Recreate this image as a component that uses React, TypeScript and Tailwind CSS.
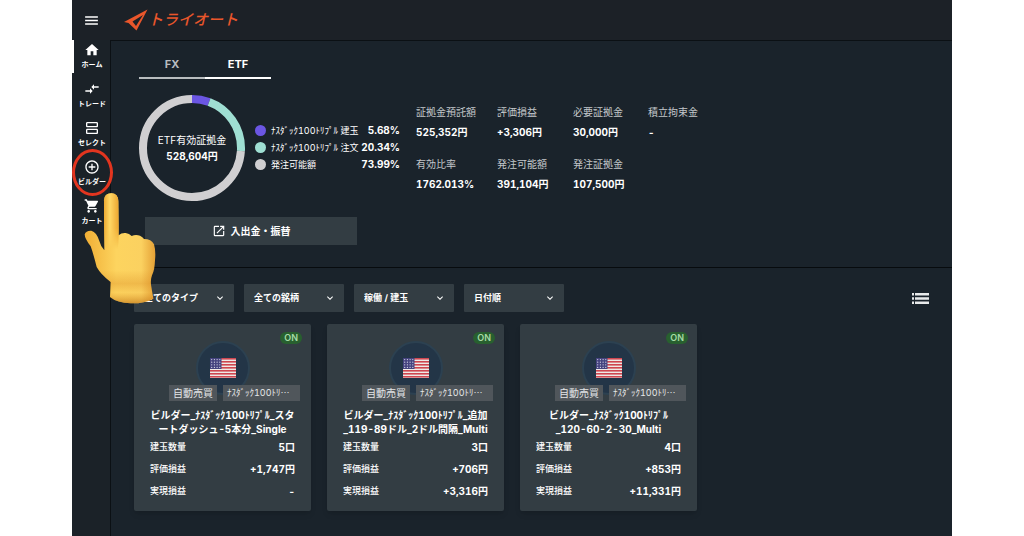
import type { IconType } from "react-icons"
import {
  MdAddCircleOutline,
  MdCompareArrows,
  MdExpandMore,
  MdHome,
  MdMenu,
  MdOpenInNew,
  MdOutlineViewAgenda,
  MdShoppingCart,
} from "react-icons/md"

type NavItem = { label: string; icon: IconType; active?: boolean; marked?: boolean }

type Strategy = {
  title: string[]
  amount: string
  valuation: string
  realized: string
}

const navItems: NavItem[] = [
  { label: "ホーム", icon: MdHome, active: true },
  { label: "トレード", icon: MdCompareArrows },
  { label: "セレクト", icon: MdOutlineViewAgenda },
  { label: "ビルダー", icon: MdAddCircleOutline, marked: true },
  { label: "カート", icon: MdShoppingCart },
]

const allocation = [
  { label: "ﾅｽﾀﾞｯｸ100ﾄﾘﾌﾟﾙ 建玉", value: 5.68, color: "#6b56e3", dot: "bg-[#6b56e3]" },
  { label: "ﾅｽﾀﾞｯｸ100ﾄﾘﾌﾟﾙ 注文", value: 20.34, color: "#9fdfd3", dot: "bg-[#9fdfd3]" },
  { label: "発注可能額", value: 73.99, color: "#d0cfd1", dot: "bg-[#d0cfd1]" },
]

const stats = [
  { label: "証拠金預託額", value: "525,352円" },
  { label: "評価損益", value: "+3,306円" },
  { label: "必要証拠金", value: "30,000円" },
  { label: "積立拘束金", value: "-" },
  { label: "有効比率", value: "1762.013%" },
  { label: "発注可能額", value: "391,104円" },
  { label: "発注証拠金", value: "107,500円" },
]

const filters = [
  { name: "タイプ", value: "全てのタイプ" },
  { name: "銘柄", value: "全ての銘柄" },
  { name: "状態", value: "稼働 / 建玉" },
  { name: "並び順", value: "日付順" },
]

const strategies: Strategy[] = [
  {
    title: ["ビルダー_ﾅｽﾀﾞｯｸ100ﾄﾘﾌﾟﾙ_スタ", "ートダッシュ-5本分_Single"],
    amount: "5口",
    valuation: "+1,747円",
    realized: "-",
  },
  {
    title: ["ビルダー_ﾅｽﾀﾞｯｸ100ﾄﾘﾌﾟﾙ_追加", "_119-89ドル_2ドル間隔_Multi"],
    amount: "3口",
    valuation: "+706円",
    realized: "+3,316円",
  },
  {
    title: ["ビルダー_ﾅｽﾀﾞｯｸ100ﾄﾘﾌﾟﾙ", "_120-60-2-30_Multi"],
    amount: "4口",
    valuation: "+853円",
    realized: "+11,331円",
  },
]

function Logo() {
  return (
    <a href="#" className="flex items-center text-[#e9562b]">
      <svg viewBox="0 0 24 22" className="h-[22px] w-6" fill="currentColor" aria-hidden="true">
        <path fillRule="evenodd" d="M0 13 23.5 .5 12.5 21.5 4.5 14ZM8.5 12.5 12 17 19 6Z" />
      </svg>
      <span className="text-[15px] leading-5 font-medium italic">トライオート</span>
    </a>
  )
}

function Sidebar() {
  return (
    <nav className="w-[39px] shrink-0 border-r border-[#0b1014] bg-[#1b2228]">
      <ul>
        {navItems.map(({ label, icon: Icon, active, marked }) => (
          <li key={label} className="relative h-[39px]">
            <a href="#" className="flex flex-col items-center gap-[2px] pt-[2px] pl-[2px] text-white">
              <Icon className="size-4" />
              <span className="text-[7px] leading-[10px] font-bold whitespace-nowrap">{label}</span>
            </a>
            {active && <span className="absolute top-0 left-0 h-[33px] w-[2px] bg-white" />}
            {marked && (
              <span className="absolute -top-[8px] left-0 h-[47px] w-[41px] rounded-[50%] border-3 border-[#e3351f]" />
            )}
          </li>
        ))}
      </ul>
    </nav>
  )
}

function Donut() {
  let start = 0
  return (
    <div className="relative flex size-[106px] shrink-0 flex-col items-center justify-center text-[10px] leading-4 text-white">
      <svg viewBox="0 0 106 106" className="absolute inset-0 -rotate-90" fill="none" aria-hidden="true">
        {allocation.map((item) => {
          const offset = -start
          start += item.value
          return (
            <circle
              key={item.label}
              cx="53"
              cy="53"
              r="49"
              pathLength={100}
              stroke={item.color}
              strokeWidth="8"
              strokeDasharray={`${item.value} 100`}
              strokeDashoffset={offset}
            />
          )
        })}
      </svg>
      <span className="whitespace-nowrap">ETF有効証拠金</span>
      <span className="font-bold">528,604円</span>
    </div>
  )
}

function UsFlag() {
  return (
    <svg viewBox="0 0 26 20" className="h-5 w-[26px]" aria-hidden="true">
      <rect width="26" height="20" fill="#efe9e6" />
      {[0, 1, 2, 3, 4, 5, 6].map((i) => (
        <rect key={i} y={i * 3} width="26" height="1.6" fill="#cf4650" />
      ))}
      <rect width="11.5" height="11" fill="#45437f" />
      {[0, 1, 2, 3].map((row) =>
        [0, 1, 2, 3].map((col) => (
          <circle key={`${row}-${col}`} cx={1.7 + col * 2.7} cy={1.6 + row * 2.6} r="0.6" fill="#d9d9ea" />
        ))
      )}
    </svg>
  )
}

function StrategyCard({ item }: { item: Strategy }) {
  const rows = [
    { label: "建玉数量", value: item.amount },
    { label: "評価損益", value: item.valuation },
    { label: "実現損益", value: item.realized },
  ]
  return (
    <article className="relative w-[177px] rounded-[2px] bg-[#333d43] pt-[17px] pb-[9px] text-white shadow-md">
      <span className="absolute top-2 right-[9px] rounded-full bg-[#28602f] px-1 text-[9px] leading-3 font-semibold text-[#a5dba6]">
        ON
      </span>
      <div className="mx-auto flex size-[54px] items-center justify-center rounded-full border-2 border-[#2c4151] bg-[#233547]">
        <UsFlag />
      </div>
      <div className="relative -mt-[10px] flex justify-end gap-[6px] pr-[11px] whitespace-nowrap text-[#e4e6e7]">
        <span className="bg-[#50565b] px-1 text-[10px] leading-4">自動売買</span>
        <span className="w-[77px] bg-[#50565b] px-1 text-[9px] leading-4">ﾅｽﾀﾞｯｸ100ﾄﾘ⋯</span>
      </div>
      <h2 className="mt-[7px] text-center text-[10px] leading-[14px] font-bold whitespace-nowrap">
        {item.title[0]}
        <br />
        {item.title[1]}
      </h2>
      <dl className="px-4">
        {rows.map((row) => (
          <div key={row.label} className="flex h-[22px] items-center justify-between">
            <dt className="text-[9px] font-medium">{row.label}</dt>
            <dd className="text-[10px] font-bold">{row.value}</dd>
          </div>
        ))}
      </dl>
    </article>
  )
}

function PointingHand() {
  return (
    <svg
      viewBox="60 218 216 333"
      className="pointer-events-none absolute top-[193px] left-3 h-[111px] w-[72px]"
      aria-hidden="true"
    >
      <defs>
        <linearGradient id="skin" x1="0" y1="0" x2="1" y2="0">
          <stop offset="0" stopColor="#f0ae35" />
          <stop offset="0.45" stopColor="#fdd45f" />
          <stop offset="0.8" stopColor="#fbd160" />
          <stop offset="1" stopColor="#e5a136" />
        </linearGradient>
        <linearGradient id="wrist" x1="0" y1="0" x2="0" y2="1">
          <stop offset="0.7" stopColor="#d98a22" stopOpacity="0" />
          <stop offset="0.82" stopColor="#d98a22" stopOpacity="0.35" />
          <stop offset="0.9" stopColor="#d98a22" stopOpacity="0.05" />
          <stop offset="1" stopColor="#b86a10" stopOpacity="0.6" />
        </linearGradient>
        <linearGradient id="finger" x1="0" y1="0" x2="1" y2="0">
          <stop offset="0" stopColor="#eda931" />
          <stop offset="0.4" stopColor="#ffd865" />
          <stop offset="1" stopColor="#eba52f" />
        </linearGradient>
        <linearGradient id="fingerFade" x1="0" y1="0" x2="0" y2="1">
          <stop offset="0.5" stopColor="#fff" />
          <stop offset="0.8" stopColor="#000" />
        </linearGradient>
        <mask id="fingerMask">
          <rect x="110" y="218" width="60" height="210" fill="url(#fingerFade)" />
        </mask>
        <path
          id="hand"
          d="M120 240Q121 219 142 219Q162 220 163 242L164 345Q172 337 185 338Q196 340 203 347Q215 341 228 346Q236 350 240 356Q262 356 270 372Q276 392 273 420Q272 450 264 465Q258 480 262 500L268 535Q240 550 200 549Q160 548 138 530L140 485Q110 462 98 440Q88 400 80 378Q62 355 62 342Q66 330 82 331Q98 335 106 362Q110 378 121 390Z"
        />
      </defs>
      <use href="#hand" fill="url(#skin)" />
      <path
        d="M120 240Q121 219 142 219Q162 220 163 242L164 348Q163 400 150 425Q128 420 121 390Z"
        fill="url(#finger)"
        mask="url(#fingerMask)"
      />
      <use href="#hand" fill="url(#wrist)" />
    </svg>
  )
}

export default function App() {
  return (
    <div className="min-h-screen bg-white px-[72px] font-['Inter','Noto_Sans_CJK_JP',sans-serif] tabular-nums">
      <div className="relative flex min-h-screen flex-col bg-[#1a232b]">
        <header className="flex h-10 items-center bg-[#1c2127] pl-[11px]">
          <button aria-label="メニュー" className="mr-6 text-white">
            <MdMenu className="size-[17px]" />
          </button>
          <Logo />
        </header>

        <div className="flex flex-1">
          <Sidebar />
          <main className="min-w-0 flex-1 border-t border-[#0b1014]">
            <section className="border-b border-[#070b0e] pt-[10px] pb-[22px] pl-7">
              <div role="tablist" className="flex w-[132px] text-[11px] font-bold">
                <button role="tab" aria-selected="false" className="h-7 flex-1 border-b-2 border-[#b9bdbf] text-[#b9bdc1]">
                  FX
                </button>
                <button role="tab" aria-selected="true" className="h-7 flex-1 border-b-2 border-white text-white">
                  ETF
                </button>
              </div>

              <div className="mt-4 flex">
                <Donut />
                <ul className="mt-[27px] ml-[10px] w-[145px] shrink-0 text-white">
                  {allocation.map((item) => (
                    <li key={item.label} className="flex h-[17px] items-center whitespace-nowrap">
                      <span className={`mr-[5px] size-[11px] shrink-0 rounded-full ${item.dot}`} />
                      <span className="text-[9px]">{item.label}</span>
                      <span className="ml-auto text-[10px] font-bold">{item.value}%</span>
                    </li>
                  ))}
                </ul>
                <dl className="mt-[7px] ml-4 grid grid-cols-[81px_76px_75px_75px] content-start gap-y-3">
                  {stats.map((s) => (
                    <div key={s.label} className="whitespace-nowrap">
                      <dt className="text-[10px] leading-5 text-[#c3c7ca]">{s.label}</dt>
                      <dd className="text-[10px] leading-5 font-bold text-white">{s.value}</dd>
                    </div>
                  ))}
                </dl>
              </div>

              <button className="mt-4 ml-[6px] flex h-7 w-[212px] items-center justify-center gap-[5px] bg-[#333d43] text-[10px] font-bold text-white">
                <MdOpenInNew className="size-[14px]" />
                入出金・振替
              </button>
            </section>

            <section className="pt-4 pr-[23px] pb-6 pl-[23px]">
              <div className="flex items-center gap-[10px]">
                {filters.map((f) => (
                  <label key={f.name} className="relative w-[100px]">
                    <select
                      aria-label={f.name}
                      className="block h-7 w-full appearance-none rounded-[1px] bg-[#333d43] pl-[10px] text-[9px] font-bold text-white"
                    >
                      <option>{f.value}</option>
                    </select>
                    <MdExpandMore className="pointer-events-none absolute top-2 right-2 size-3 text-white" />
                  </label>
                ))}
                <button aria-label="リスト表示" className="ml-auto text-[#e8eaeb]">
                  <svg viewBox="0 0 17 11" className="h-[11px] w-[17px]" fill="currentColor" aria-hidden="true">
                    <path d="M0 0h2v2.5H0zM3 0h14v2.5H3zM0 4.2h2v2.6H0zM3 4.2h14v2.6H3zM0 8.5h2V11H0zM3 8.5h14V11H3z" />
                  </svg>
                </button>
              </div>

              <div className="mt-3 flex flex-wrap gap-4">
                {strategies.map((item) => (
                  <StrategyCard key={item.title.join("")} item={item} />
                ))}
              </div>
            </section>
          </main>
        </div>

        <PointingHand />
      </div>
    </div>
  )
}
